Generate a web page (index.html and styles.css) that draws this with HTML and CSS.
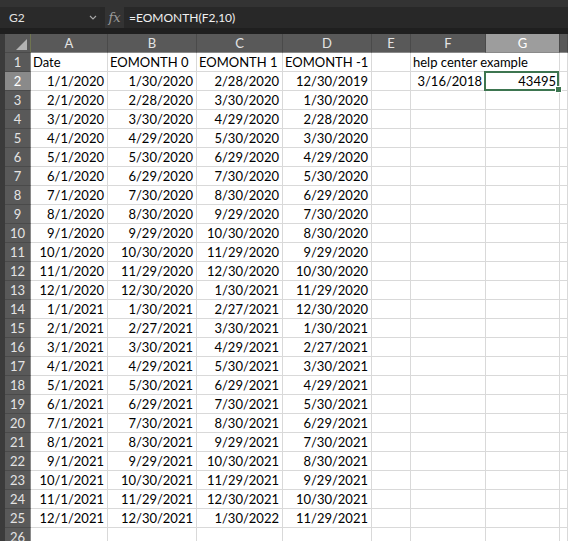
FILE: index.html
```html
<!DOCTYPE html>
<html>
<head>
<meta charset="utf-8">
<link rel="stylesheet" href="styles.css">
</head>
<body>
<div class="app">
  <div class="fbar">
    <div class="namebox"><span class="nbtext">G2</span><svg class="chev" width="8" height="5" viewBox="0 0 8 5"><path d="M1 1 L4 4 L7 1" fill="none" stroke="#a8a8a8" stroke-width="1.1"/></svg></div>
    <div class="fx">fx</div>
    <div class="formula">=EOMONTH(F2,10)</div>
  </div>
  <div class="sheet">
    <div class="grid">
      <div class="corner"><svg class="tri" width="11" height="11" viewBox="0 0 11 11"><path d="M11 0 L11 11 L0 11 Z" fill="#b3b3b3"/></svg></div>
      <div class="ch">A</div><div class="ch">B</div><div class="ch">C</div><div class="ch">D</div><div class="ch">E</div><div class="ch">F</div><div class="ch sel">G</div><div class="ch"></div>

      <div class="rh">1</div><div class="c l">Date</div><div class="c l">EOMONTH 0</div><div class="c l">EOMONTH 1</div><div class="c l">EOMONTH -1</div><div class="c"></div><div class="c l span2">help center example</div><div class="c"></div>
      <div class="rh rsel">2</div><div class="c r">1/1/2020</div><div class="c r">1/30/2020</div><div class="c r">2/28/2020</div><div class="c r">12/30/2019</div><div class="c"></div><div class="c r">3/16/2018</div><div class="c r active">43495</div><div class="c"></div>
      <div class="rh">3</div><div class="c r">2/1/2020</div><div class="c r">2/28/2020</div><div class="c r">3/30/2020</div><div class="c r">1/30/2020</div><div class="c"></div><div class="c"></div><div class="c"></div><div class="c"></div>
      <div class="rh">4</div><div class="c r">3/1/2020</div><div class="c r">3/30/2020</div><div class="c r">4/29/2020</div><div class="c r">2/28/2020</div><div class="c"></div><div class="c"></div><div class="c"></div><div class="c"></div>
      <div class="rh">5</div><div class="c r">4/1/2020</div><div class="c r">4/29/2020</div><div class="c r">5/30/2020</div><div class="c r">3/30/2020</div><div class="c"></div><div class="c"></div><div class="c"></div><div class="c"></div>
      <div class="rh">6</div><div class="c r">5/1/2020</div><div class="c r">5/30/2020</div><div class="c r">6/29/2020</div><div class="c r">4/29/2020</div><div class="c"></div><div class="c"></div><div class="c"></div><div class="c"></div>
      <div class="rh">7</div><div class="c r">6/1/2020</div><div class="c r">6/29/2020</div><div class="c r">7/30/2020</div><div class="c r">5/30/2020</div><div class="c"></div><div class="c"></div><div class="c"></div><div class="c"></div>
      <div class="rh">8</div><div class="c r">7/1/2020</div><div class="c r">7/30/2020</div><div class="c r">8/30/2020</div><div class="c r">6/29/2020</div><div class="c"></div><div class="c"></div><div class="c"></div><div class="c"></div>
      <div class="rh">9</div><div class="c r">8/1/2020</div><div class="c r">8/30/2020</div><div class="c r">9/29/2020</div><div class="c r">7/30/2020</div><div class="c"></div><div class="c"></div><div class="c"></div><div class="c"></div>
      <div class="rh">10</div><div class="c r">9/1/2020</div><div class="c r">9/29/2020</div><div class="c r">10/30/2020</div><div class="c r">8/30/2020</div><div class="c"></div><div class="c"></div><div class="c"></div><div class="c"></div>
      <div class="rh">11</div><div class="c r">10/1/2020</div><div class="c r">10/30/2020</div><div class="c r">11/29/2020</div><div class="c r">9/29/2020</div><div class="c"></div><div class="c"></div><div class="c"></div><div class="c"></div>
      <div class="rh">12</div><div class="c r">11/1/2020</div><div class="c r">11/29/2020</div><div class="c r">12/30/2020</div><div class="c r">10/30/2020</div><div class="c"></div><div class="c"></div><div class="c"></div><div class="c"></div>
      <div class="rh">13</div><div class="c r">12/1/2020</div><div class="c r">12/30/2020</div><div class="c r">1/30/2021</div><div class="c r">11/29/2020</div><div class="c"></div><div class="c"></div><div class="c"></div><div class="c"></div>
      <div class="rh">14</div><div class="c r">1/1/2021</div><div class="c r">1/30/2021</div><div class="c r">2/27/2021</div><div class="c r">12/30/2020</div><div class="c"></div><div class="c"></div><div class="c"></div><div class="c"></div>
      <div class="rh">15</div><div class="c r">2/1/2021</div><div class="c r">2/27/2021</div><div class="c r">3/30/2021</div><div class="c r">1/30/2021</div><div class="c"></div><div class="c"></div><div class="c"></div><div class="c"></div>
      <div class="rh">16</div><div class="c r">3/1/2021</div><div class="c r">3/30/2021</div><div class="c r">4/29/2021</div><div class="c r">2/27/2021</div><div class="c"></div><div class="c"></div><div class="c"></div><div class="c"></div>
      <div class="rh">17</div><div class="c r">4/1/2021</div><div class="c r">4/29/2021</div><div class="c r">5/30/2021</div><div class="c r">3/30/2021</div><div class="c"></div><div class="c"></div><div class="c"></div><div class="c"></div>
      <div class="rh">18</div><div class="c r">5/1/2021</div><div class="c r">5/30/2021</div><div class="c r">6/29/2021</div><div class="c r">4/29/2021</div><div class="c"></div><div class="c"></div><div class="c"></div><div class="c"></div>
      <div class="rh">19</div><div class="c r">6/1/2021</div><div class="c r">6/29/2021</div><div class="c r">7/30/2021</div><div class="c r">5/30/2021</div><div class="c"></div><div class="c"></div><div class="c"></div><div class="c"></div>
      <div class="rh">20</div><div class="c r">7/1/2021</div><div class="c r">7/30/2021</div><div class="c r">8/30/2021</div><div class="c r">6/29/2021</div><div class="c"></div><div class="c"></div><div class="c"></div><div class="c"></div>
      <div class="rh">21</div><div class="c r">8/1/2021</div><div class="c r">8/30/2021</div><div class="c r">9/29/2021</div><div class="c r">7/30/2021</div><div class="c"></div><div class="c"></div><div class="c"></div><div class="c"></div>
      <div class="rh">22</div><div class="c r">9/1/2021</div><div class="c r">9/29/2021</div><div class="c r">10/30/2021</div><div class="c r">8/30/2021</div><div class="c"></div><div class="c"></div><div class="c"></div><div class="c"></div>
      <div class="rh">23</div><div class="c r">10/1/2021</div><div class="c r">10/30/2021</div><div class="c r">11/29/2021</div><div class="c r">9/29/2021</div><div class="c"></div><div class="c"></div><div class="c"></div><div class="c"></div>
      <div class="rh">24</div><div class="c r">11/1/2021</div><div class="c r">11/29/2021</div><div class="c r">12/30/2021</div><div class="c r">10/30/2021</div><div class="c"></div><div class="c"></div><div class="c"></div><div class="c"></div>
      <div class="rh">25</div><div class="c r">12/1/2021</div><div class="c r">12/30/2021</div><div class="c r">1/30/2022</div><div class="c r">11/29/2021</div><div class="c"></div><div class="c"></div><div class="c"></div><div class="c"></div>
      <div class="rh">26</div><div class="c"></div><div class="c"></div><div class="c"></div><div class="c"></div><div class="c"></div><div class="c"></div><div class="c"></div><div class="c"></div>
    </div>
  </div>
</div>
</body>
</html>
```
FILE: styles.css
```css
html, body {
  margin: 0;
  padding: 0;
  background: #262626;
  overflow: hidden;
}
.app {
  width: 568px;
  height: 541px;
  overflow: hidden;
  font-family: Lato, "Liberation Sans", sans-serif;
}
.fbar {
  height: 34px;
  box-sizing: border-box;
  border-top: 7px solid #333333;
  border-bottom: 6px solid #1f1f1f;
  background: #282828;
  display: flex;
  align-items: stretch;
}
.namebox {
  width: 100px;
  display: flex;
  align-items: center;
  justify-content: space-between;
  padding: 0 2px 0 9px;
  box-sizing: border-box;
  background: #2a2a2a;
}
.nbtext {
  color: #e2e2e2;
  font-size: 12px;
}
.chev {
  margin-right: 1px;
}
.fx {
  margin-left: 5px;
  width: 19px;
  background: #333333;
  color: #9a9a9a;
  font-family: "DejaVu Serif", "Liberation Serif", serif;
  font-style: italic;
  font-size: 13px;
  display: flex;
  align-items: center;
  justify-content: center;
}
.formula {
  flex: 1;
  padding-left: 5px;
  color: #f0f0f0;
  font-size: 12px;
  display: flex;
  align-items: center;
}
.sheet {
  background: #3b3b3b;
  padding-left: 5px;
  height: 507px;
}
.grid {
  display: grid;
  grid-template-columns: 26px 77px 89px 86px 89px 39px 75px 74px 1fr;
  grid-auto-rows: 19px;
  font-size: 13px;
  line-height: 18px;
}
.grid > div {
  box-sizing: border-box;
  white-space: nowrap;
}
.corner {
  background: #595959;
  border-right: 1px solid #6f7450;
  border-bottom: 1px solid #4a4a4a;
  position: relative;
}
.tri {
  position: absolute;
  right: 3px;
  bottom: 2px;
}
.ch {
  background: #595959;
  color: #e4e4e4;
  text-align: center;
  border-right: 1px solid #4a4a4a;
  border-bottom: 1px solid #8a8a8a;
}
.ch.sel {
  background: #9d9d9d;
  color: #ffffff;
}
.rh {
  background: #595959;
  color: #e4e4e4;
  text-align: center;
  border-bottom: 1px solid #4a4a4a;
  border-right: 1px solid #8a8a8a;
}
.rh.rsel {
  background: #8a8a8a;
  color: #ffffff;
}
.c {
  background: #ffffff;
  color: #000000;
  border-right: 1px solid #d9d9d9;
  border-bottom: 1px solid #d9d9d9;
  overflow: hidden;
}
.c.l {
  padding-left: 2px;
}
.c.r {
  text-align: right;
  padding-right: 3px;
}
.span2 {
  grid-column: span 2;
}
.active {
  position: relative;
  overflow: visible !important;
}
.active::after {
  content: "";
  position: absolute;
  top: -1px;
  left: -2px;
  right: 0;
  bottom: -1px;
  border: 2px solid #3d7550;
}
.active::before {
  content: "";
  position: absolute;
  right: -2px;
  bottom: -2px;
  width: 5px;
  height: 5px;
  background: #3d7550;
  box-shadow: 0 0 0 1px #ffffff;
  z-index: 2;
}
```
